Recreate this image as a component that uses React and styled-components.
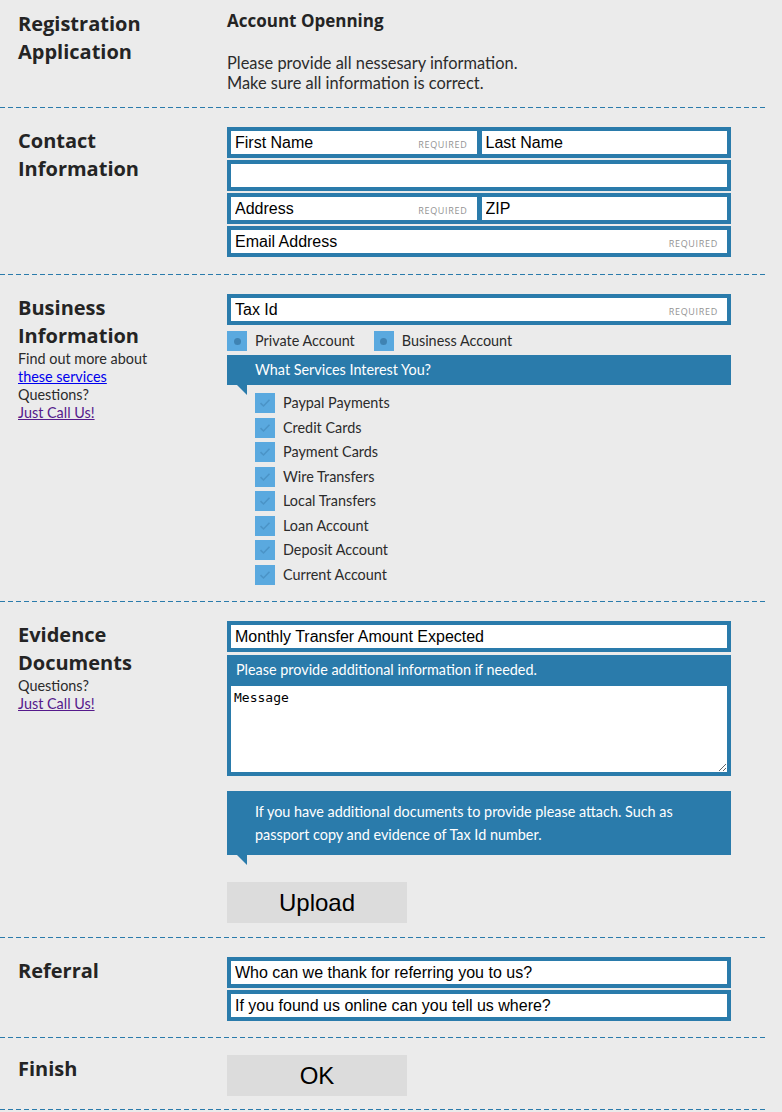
import React from 'react';
import styled, { createGlobalStyle } from 'styled-components';

const BLUE = '#2a7bab';
const SKY = '#5aa9df';

const GlobalStyle = createGlobalStyle`
  body {
    margin: 0;
    background: #ebebeb;
    font-family: Lato, "Open Sans", sans-serif;
    color: #2b2b2b;
  }
`;

const Form = styled.form`
  width: 768px;
`;

const Section = styled.section`
  display: grid;
  grid-template-columns: 209px 504px;
  padding: ${(p) => p.$top || 18}px 0 ${(p) => p.$bottom || 14}px 18px;
  background: linear-gradient(to right, ${BLUE} 5px, transparent 5px) left bottom / 8px 1px repeat-x;
  margin-bottom: 1px;
`;

const Side = styled.div`
  display: flex;
  flex-direction: column;
`;

const Heading = styled.h2`
  margin: 0;
  font-family: "Open Sans", sans-serif;
  font-size: 20px;
  line-height: 28px;
  font-weight: 700;
  color: #242424;
`;

const Note = styled.div`
  font-size: 14.4px;
  line-height: 18px;
  color: #2b2b2b;

  a { color: #0000ee; }
  a:visited, a.visited { color: #551a8b; }
`;

const Main = styled.div`
  display: flex;
  flex-direction: column;
`;

const Title = styled.h1`
  margin: 0;
  font-family: "Open Sans", sans-serif;
  font-size: 17px;
  line-height: 22px;
  font-weight: 700;
  color: #242424;
`;

const Intro = styled.p`
  margin: 21px 0 0;
  font-size: 16.4px;
  line-height: 20px;
`;

const FieldRow = styled.div`
  display: flex;
  gap: 5px;
  height: 31px;
  box-sizing: border-box;
  padding: 4px;
  background: ${BLUE};
  margin-top: ${(p) => p.$gap ?? 2}px;
`;

const Field = styled.label`
  position: relative;
  flex: 1;
  display: flex;
  background: #fff;
`;

const Input = styled.input`
  flex: 1;
  min-width: 0;
  border: none;
  outline: none;
  padding: 0 4px;
  background: transparent;
  font-family: "Liberation Sans", Arial, sans-serif;
  font-size: 16px;
  color: #000;

  &::placeholder { color: #000; opacity: 1; }
`;

const Required = styled.span`
  position: absolute;
  right: 9px;
  bottom: 3px;
  font-family: "Open Sans", sans-serif;
  font-size: 9px;
  letter-spacing: 0.7px;
  color: #939393;
  pointer-events: none;
`;

const RadioRow = styled.div`
  display: flex;
  gap: 19px;
  margin: 6px 0 4px;
`;

const Option = styled.label`
  display: flex;
  align-items: center;
  gap: 8px;
  font-size: 14.4px;
  line-height: 20px;
  color: #2b2b2b;
`;

const RadioBox = styled.span`
  width: 20px;
  height: 20px;
  background: ${SKY};
  display: flex;
  align-items: center;
  justify-content: center;

  &::after {
    content: '';
    width: 7px;
    height: 7px;
    border-radius: 50%;
    background: #3f83b3;
  }
`;

const Bubble = styled.div`
  position: relative;
  background: ${BLUE};
  color: #fff;
  font-size: 14.4px;
  line-height: ${(p) => (p.$tall ? 23 : 30)}px;
  padding: ${(p) => (p.$tall ? '9px 28px' : '0 28px')};
  margin-top: ${(p) => p.$mt || 0}px;

  &::after {
    content: '';
    position: absolute;
    left: 10px;
    top: 100%;
    border-top: 10px solid ${BLUE};
    border-left: 10px solid transparent;
  }
`;

const Checklist = styled.div`
  display: flex;
  flex-direction: column;
  gap: 4.5px;
  margin-top: 8px;
  padding-left: 28px;
`;

const CheckBox = styled.span`
  width: 20px;
  height: 20px;
  background: ${SKY};
  display: flex;
  align-items: center;
  justify-content: center;
`;

const MessageBox = styled.div`
  background: ${BLUE};
  margin-top: 3px;
  padding: 0 4px 4px;
  display: flex;
  flex-direction: column;
`;

const MessageHint = styled.div`
  color: #fff;
  font-size: 14.4px;
  line-height: 20px;
  padding: 5px 5px 6px;
`;

const TextArea = styled.textarea`
  height: 86px;
  box-sizing: border-box;
  border: none;
  outline: none;
  padding: 4px 3px;
  font-family: "DejaVu Sans Mono", monospace;
  font-size: 13px;
  color: #000;
  display: block;

  &::placeholder { color: #000; opacity: 1; }
`;

const Button = styled.button`
  width: 180px;
  height: 41px;
  border: none;
  background: #dcdcdc;
  font-family: "Liberation Sans", Arial, sans-serif;
  font-size: 24px;
  color: #000;
  margin-top: ${(p) => p.$mt || 0}px;
  padding: 0;
`;

const Check = () => (
  <svg width="12" height="10" viewBox="0 0 12 10">
    <path d="M1.5 5.2 L4.5 8 L10.5 1.8" fill="none" stroke="#4b94c7" strokeWidth="1.6" />
  </svg>
);

const services = [
  'Paypal Payments',
  'Credit Cards',
  'Payment Cards',
  'Wire Transfers',
  'Local Transfers',
  'Loan Account',
  'Deposit Account',
  'Current Account',
];

const Text = ({ placeholder, required }) => (
  <Field>
    <Input placeholder={placeholder} />
    {required && <Required>REQUIRED</Required>}
  </Field>
);

export default function App() {
  return (
    <>
      <GlobalStyle />
      <Form onSubmit={(e) => e.preventDefault()}>
        <Section $top={10} $bottom={15}>
          <Side>
            <Heading>Registration<br />Application</Heading>
          </Side>
          <Main>
            <Title>Account Openning</Title>
            <Intro>
              Please provide all nessesary information.<br />
              Make sure all information is correct.
            </Intro>
          </Main>
        </Section>

        <Section $bottom={18}>
          <Side>
            <Heading>Contact<br />Information</Heading>
          </Side>
          <Main>
            <FieldRow $gap={0}>
              <Text placeholder="First Name" required />
              <Text placeholder="Last Name" />
            </FieldRow>
            <FieldRow>
              <Text />
            </FieldRow>
            <FieldRow>
              <Text placeholder="Address" required />
              <Text placeholder="ZIP" />
            </FieldRow>
            <FieldRow>
              <Text placeholder="Email Address" required />
            </FieldRow>
          </Main>
        </Section>

        <Section $bottom={17.5}>
          <Side>
            <Heading>Business<br />Information</Heading>
            <Note>
              Find out more about<br />
              <a href="#services">these services</a><br />
              Questions?<br />
              <a className="visited" href="#call">Just Call Us!</a>
            </Note>
          </Side>
          <Main>
            <FieldRow $gap={0}>
              <Text placeholder="Tax Id" required />
            </FieldRow>
            <RadioRow>
              <Option><RadioBox />Private Account</Option>
              <Option><RadioBox />Business Account</Option>
            </RadioRow>
            <Bubble>What Services Interest You?</Bubble>
            <Checklist>
              {services.map((s) => (
                <Option key={s}>
                  <CheckBox><Check /></CheckBox>
                  {s}
                </Option>
              ))}
            </Checklist>
          </Main>
        </Section>

        <Section $bottom={15}>
          <Side>
            <Heading>Evidence<br />Documents</Heading>
            <Note>
              Questions?<br />
              <a className="visited" href="#call">Just Call Us!</a>
            </Note>
          </Side>
          <Main>
            <FieldRow $gap={0}>
              <Text placeholder="Monthly Transfer Amount Expected" />
            </FieldRow>
            <MessageBox>
              <MessageHint>Please provide additional information if needed.</MessageHint>
              <TextArea placeholder="Message" />
            </MessageBox>
            <Bubble $tall $mt={15}>
              If you have additional documents to provide please attach. Such as passport copy and evidence of Tax Id number.
            </Bubble>
            <div>
              <Button type="button" $mt={27}>Upload</Button>
            </div>
          </Main>
        </Section>

        <Section $bottom={17}>
          <Side>
            <Heading>Referral</Heading>
          </Side>
          <Main>
            <FieldRow $gap={0}>
              <Text placeholder="Who can we thank for referring you to us?" />
            </FieldRow>
            <FieldRow>
              <Text placeholder="If you found us online can you tell us where?" />
            </FieldRow>
          </Main>
        </Section>

        <Section $top={16} $bottom={14}>
          <Side>
            <Heading>Finish</Heading>
          </Side>
          <Main>
            <div>
              <Button type="submit">OK</Button>
            </div>
          </Main>
        </Section>
      </Form>
    </>
  );
}
